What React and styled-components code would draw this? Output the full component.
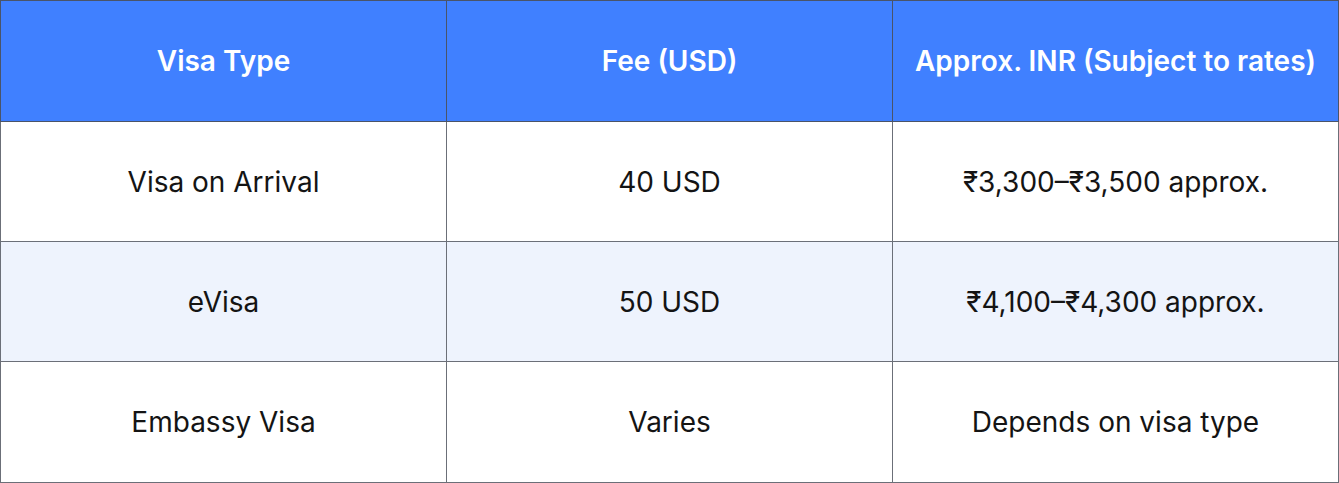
import styled, { createGlobalStyle } from 'styled-components'

const GlobalStyle = createGlobalStyle`
  body {
    margin: 0;
    background: #ffffff;
    font-family: Inter, "Noto Sans", sans-serif;
  }
`

const Table = styled.table`
  width: 1339px;
  border-collapse: collapse;
  table-layout: fixed;
`

const HeadCell = styled.th`
  height: 120px;
  padding: 0;
  background: #4080ff;
  color: #ffffff;
  font-size: 28px;
  font-weight: 600;
  text-align: center;
  border: 1px solid #4a5468;
`

const Row = styled.tr`
  background: ${p => (p.$striped ? '#eef3fd' : '#ffffff')};
`

const Cell = styled.td`
  height: ${p => (p.$last ? '120px' : '119px')};
  padding: 0;
  color: #141414;
  font-size: 28px;
  font-weight: 400;
  text-align: center;
  border: 1px solid #6b6f78;
`

const rows = [
  ['Visa on Arrival', '40 USD', '₹3,300–₹3,500 approx.'],
  ['eVisa', '50 USD', '₹4,100–₹4,300 approx.'],
  ['Embassy Visa', 'Varies', 'Depends on visa type'],
]

const App = () => {
  return (
    <>
      <GlobalStyle />
      <Table>
        <thead>
          <tr>
            <HeadCell>Visa Type</HeadCell>
            <HeadCell>Fee (USD)</HeadCell>
            <HeadCell>Approx. INR (Subject to rates)</HeadCell>
          </tr>
        </thead>
        <tbody>
          {rows.map((r, i) => (
            <Row key={r[0]} $striped={i === 1}>
              {r.map(c => <Cell key={c} $last={i === rows.length - 1}>{c}</Cell>)}
            </Row>
          ))}
        </tbody>
      </Table>
    </>
  )
}

export default App
